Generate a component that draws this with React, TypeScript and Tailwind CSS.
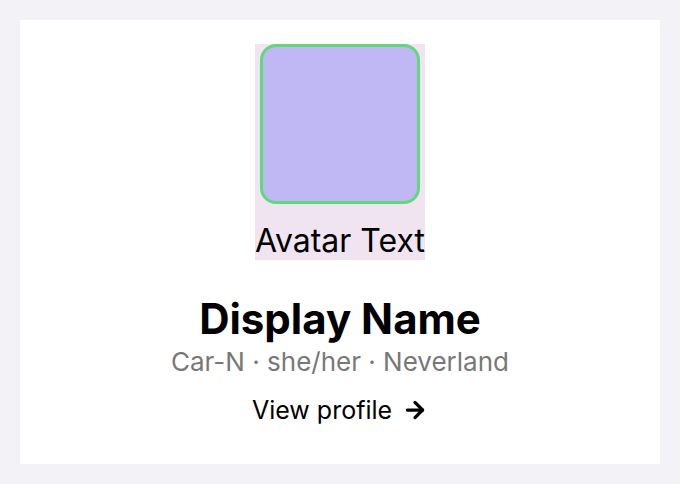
import { ArrowRight } from "lucide-react";

export default function App() {
  return (
    <div
      className="min-h-screen bg-[#f2f2f7] p-5"
      style={{ fontFamily: "Inter, 'Noto Sans', sans-serif" }}
    >
      <div className="bg-white h-[444px] flex flex-col items-center pt-6">
        <div className="bg-[#f1e4f1] flex flex-col items-center">
          <div className="w-40 h-40 rounded-2xl border-[3px] border-[#5fd97a] bg-[#c0b8f4]" />
          <div className="mt-[18px] text-[32px] leading-[38px] text-black">Avatar Text</div>
        </div>
        <h1 className="mt-[33px] text-[42px] leading-[51px] font-bold text-black">Display Name</h1>
        <p className="mt-[2px] text-[26px] leading-[31px] text-[#787878]">
          Car-N · she/her · Neverland
        </p>
        <a href="#" className="mt-[18px] flex items-center gap-2.5 text-[25px] leading-[30px] text-black">
          View profile
          <ArrowRight size={26} strokeWidth={3} />
        </a>
      </div>
    </div>
  );
}
